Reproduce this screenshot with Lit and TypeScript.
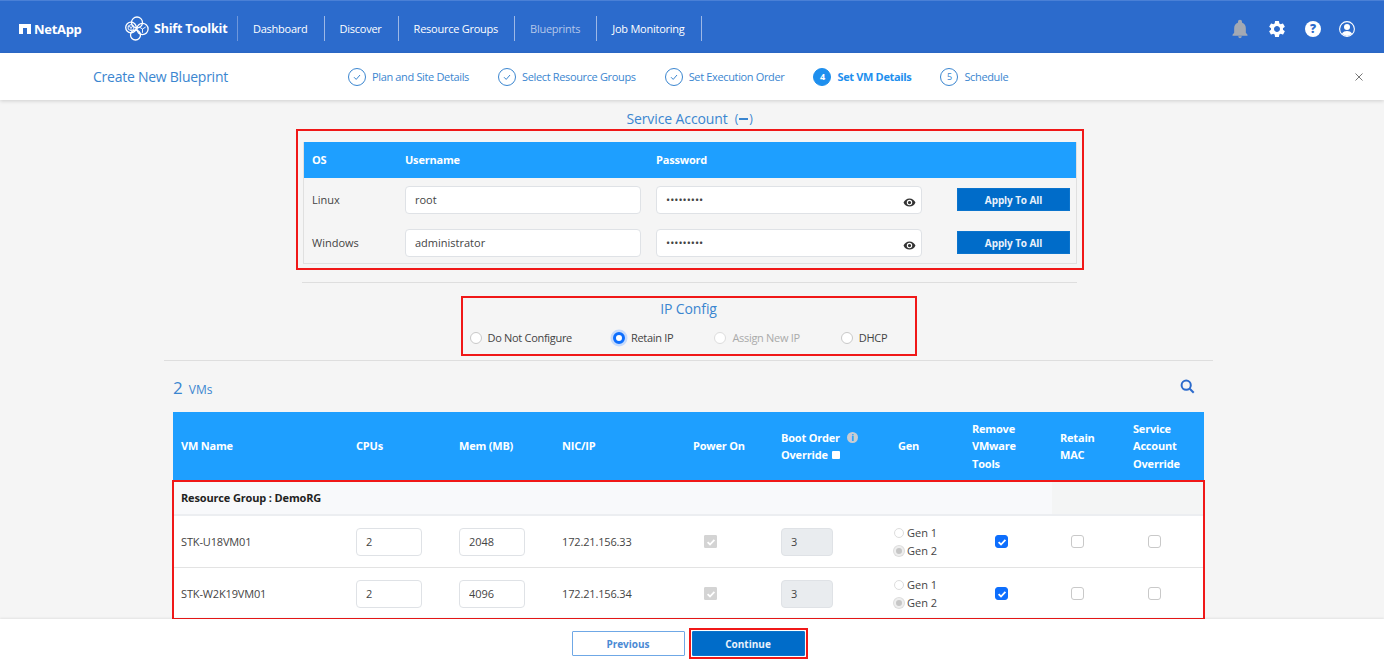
import { LitElement, html, css, svg } from 'lit';
import { customElement } from 'lit/decorators.js';

const NAV = [
  { label: 'Dashboard' },
  { label: 'Discover' },
  { label: 'Resource Groups' },
  { label: 'Blueprints', dim: true },
  { label: 'Job Monitoring' },
];

const STEPS = [
  { label: 'Plan and Site Details', state: 'done' },
  { label: 'Select Resource Groups', state: 'done' },
  { label: 'Set Execution Order', state: 'done' },
  { label: 'Set VM Details', state: 'active', num: 4 },
  { label: 'Schedule', state: 'todo', num: 5 },
];

const ACCOUNTS = [
  { os: 'Linux', user: 'root' },
  { os: 'Windows', user: 'administrator' },
];

const IP_OPTIONS = [
  { label: 'Do Not Configure' },
  { label: 'Retain IP', on: true },
  { label: 'Assign New IP', off: true },
  { label: 'DHCP' },
];

const VMS = [
  { name: 'STK-U18VM01', cpus: '2', mem: '2048', ip: '172.21.156.33' },
  { name: 'STK-W2K19VM01', cpus: '2', mem: '4096', ip: '172.21.156.34' },
];

const tick = svg`<path d="M3.6 7.2l2.4 2.3 4.4-4.6" fill="none" stroke="#fff" stroke-width="1.8"/>`;

@customElement('app-root')
export class AppRoot extends LitElement {
  static styles = css`
    :host {
      display: flex;
      flex-direction: column;
      height: 666px;
      overflow: hidden;
      background: #f5f5f5;
      color: #444;
      font-family: 'Open Sans', 'Noto Sans', sans-serif;
      font-size: 11px;
    }
    svg { display: block; }

    .topbar {
      flex: none;
      height: 53px;
      box-sizing: border-box;
      display: flex;
      align-items: center;
      background: #2c6bcc;
      border-top: 1px solid #4a80d6;
      color: #fff;
      padding: 3px 0 0 19px;
    }
    .netapp { display: flex; align-items: center; gap: 3px; width: 106px; font-size: 13px; font-weight: 700; letter-spacing: -0.3px; }
    .shift { display: flex; align-items: center; gap: 5px; width: 113px; box-sizing: border-box; font-size: 12.5px; font-weight: 700; letter-spacing: -0.2px; border-right: 1px solid #6e97dc; height: 25px; }
    .nav { display: flex; align-items: center; }
    .nav span { padding: 0 16px 0 15px; height: 25px; line-height: 25px; border-right: 1px solid #9db8e6; letter-spacing: -0.25px; }
    .nav span.dim { color: #b4c7ea; }
    .top-icons { margin-left: auto; margin-right: 29px; display: flex; align-items: center; gap: 17px; }
    .help { width: 16px; height: 16px; margin: 0 1px; border-radius: 50%; background: #fff; color: #2c6bcc; font-size: 12px; font-weight: 800; line-height: 16px; text-align: center; }

    .subbar {
      flex: none;
      height: 47px;
      display: flex;
      align-items: center;
      background: #fff;
      box-shadow: 0 1px 4px rgba(0, 0, 0, 0.16);
      position: relative;
      color: #3b86d0;
    }
    .subbar h1 { margin: 0 0 0 93px; width: 255px; font-size: 14px; font-weight: 400; letter-spacing: -0.25px; }
    .steps { display: flex; gap: 29px; }
    .step { display: flex; align-items: center; gap: 6px; letter-spacing: -0.35px; }
    .step.active { font-weight: 700; color: #1e8fee; gap: 6px; }
    .dot { width: 16px; height: 16px; box-sizing: content-box; border: 1px solid #3b86d0; border-radius: 50%; display: flex; align-items: center; justify-content: center; font-size: 9px; }
    .step.active .dot { background: #1e8fee; border-color: #1e8fee; color: #fff; }
    .close { margin-left: auto; margin-right: 21px; color: #777; }

    main { flex: 1; min-height: 0; display: flex; flex-direction: column; width: 1379px; }
    .sec-title { color: #3b86d0; font-size: 14px; font-weight: 400; text-align: center; letter-spacing: -0.1px; }
    .account-title { display: flex; justify-content: center; align-items: center; gap: 7px; height: 20px; margin-top: 9px; }
    .minus { display: flex; align-items: center; gap: 1px; font-size: 12px; }
    .minus i { display: block; width: 9px; height: 2px; background: #3b86d0; }

    .account-box { align-self: center; margin-left: 1px; width: 788px; height: 142px; box-sizing: border-box; border: 2px solid #f01818; padding: 11px 5px 4px; }
    .account-inner { height: 100%; box-sizing: border-box; border: 1px solid #e0e0e0; border-top: 0; }
    .acc-row { display: grid; grid-template-columns: 101px 251px 301px 1fr; align-items: center; }
    .acc-head { height: 36px; background: #1e9fff; color: #fff; font-weight: 700; margin-right: 0; letter-spacing: -0.2px; }
    .acc-row > div:first-child { padding-left: 8px; }
    .acc-body { display: flex; flex-direction: column; gap: 15px; padding-top: 8px; }
    .acc-body .acc-row { height: 28px; }
    .field { font: inherit; color: #444; background: #fff; border: 1px solid #dfe2e6; border-radius: 4px; box-sizing: border-box; height: 28px; padding: 0 9px; outline: none; display: block; }
    .user { width: 236px; }
    .pass-wrap { position: relative; width: 266px; }
    .pass-wrap .field { width: 100%; }
    .eye { position: absolute; right: 6px; top: 10px; }
    .apply { width: 113px; height: 23px; padding: 0; border: 1px solid #0b74cd; background: #006cc9; color: #e8f1fb; font: inherit; font-weight: 700; font-size: 10px; letter-spacing: -0.1px; }

    .rule1 { height: 1px; background: #dedede; width: 775px; margin: 12px 0 0 302px; }
    .ip-box { align-self: center; width: 456px; height: 60px; box-sizing: border-box; margin: 13px 0 4px -2px; border: 2px solid #f01818; padding-top: 1px; }
    .ip-opts { display: flex; gap: 41px; padding: 12px 0 0 7px; }
    .ip-opt { display: flex; align-items: center; gap: 6px; letter-spacing: -0.3px; }
    .ip-opt.off { color: #aaa; }
    .radio { width: 12px; height: 12px; box-sizing: border-box; background: #fff; border: 1px solid #c9c9c9; border-radius: 50%; flex: none; }
    .radio.off { border-color: #ddd; }
    .radio.on { border: 3.5px solid #0d6efd; box-shadow: 0 0 0 2.5px #c5dafb; }
    .radio.sm { width: 10px; height: 10px; border-color: #ddd; }
    .radio.sel { background: #c6c6c6; border: 2px solid #eee; box-shadow: 0 0 0 1px #ddd; }
    .rule2 { height: 1px; background: #dedede; width: 1049px; margin-left: 164px; }

    .vm-wrap { margin: 0 0 0 173px; width: 1031px; }
    .vm-top { display: flex; align-items: center; justify-content: space-between; height: 51px; color: #3b86d0; font-size: 12px; padding-right: 9px; }
    .vm-top b { font-size: 17px; font-weight: 400; margin-right: 6px; }
    .vm-count { display: flex; align-items: baseline; padding-top: 2px; }
    .vm-row { display: grid; grid-template-columns: 175px 103px 103px 131px 88px 117px 74px 88px 73px 79px; align-items: center; }
    .vm-row > div { padding-left: 8px; }
    .vm-head { height: 68px; background: #1e9fff; color: #fff; font-weight: 700; line-height: 17.5px; letter-spacing: -0.2px; }
    .boot-line { display: flex; align-items: center; gap: 7px; }
    .boot-line .mini { width: 8px; height: 8px; background: #fff; margin-left: -3px; border-radius: 1px; }
    .info { width: 11px; height: 11px; border-radius: 50%; background: #c8ccd2; color: #1e9fff; font-size: 8px; font-weight: 800; line-height: 11px; text-align: center; }

    .vm-body { outline: 2px solid #f01818; outline-offset: -1px; background: #fff; margin-top: 1px; }
    .group { height: 35px; box-sizing: border-box; background: linear-gradient(90deg, #f8f9fb 879px, #f4f5f5 879px); border-bottom: 2px solid #eceef1; padding-left: 8px; line-height: 33px; font-weight: 700; color: #222; letter-spacing: -0.15px; }
    .vm-line { height: 51px; border-bottom: 1px solid #e3e3e3; letter-spacing: -0.15px; }
    .vm-line:last-child { border-bottom: 0; }
    .num { width: 66px; }
    .boot { width: 52px; background: #e9ecef; }
    .gen { display: flex; flex-direction: column; gap: 3px; }
    .gen label { display: flex; align-items: center; gap: 3px; margin-left: -4px; line-height: 15px; letter-spacing: 0; }
    .box { width: 13px; height: 13px; box-sizing: border-box; border: 1px solid #c9c9c9; border-radius: 3px; background: #fff; }
    .box.lock { background: #d4d4d4; border-color: #d4d4d4; border-radius: 1px; }
    .box.blue { background: #0d6efd; border-color: #0d6efd; }
    .c-power { margin-left: 11px; }
    .c-remove { margin-left: 23px; }
    .c-retain { margin-left: 11px; }
    .c-svc { margin-left: 15px; }

    footer {
      flex: none;
      height: 47px;
      display: flex;
      justify-content: center;
      align-items: flex-start;
      gap: 4px;
      box-sizing: border-box;
      padding: 9px 5px 0 0;
      background: #fff;
      box-shadow: 0 -1px 2px rgba(0, 0, 0, 0.08);
      position: relative;
    }
    .btn { width: 113px; height: 25px; padding: 0; font: inherit; font-size: 10px; font-weight: 700; border-radius: 1px; }
    .prev { margin-top: 3px; background: #fff; color: #4a8ad4; border: 1px solid #6fa8e6; }
    .next-box { border: 2px solid #f01818; padding: 1px; }
    .next { display: block; background: #006cc9; color: #e8f1fb; border: 1px solid #0b74cd; }
  `;

  private logo() {
    return html`<svg width="24" height="25" viewBox="0 0 24 25" fill="none" stroke="#fff" stroke-width="1.3">
      <circle cx="12" cy="6.5" r="5.5" />
      <circle cx="6" cy="11.5" r="5.3" />
      <circle cx="17.5" cy="13" r="5.6" />
      <circle cx="10.5" cy="19" r="5" />
      <path d="M6 8.5l2.8 1.5v3.2L6 14.7l-2.8-1.5V10zM6 11.5v3.2M6 11.5l2.8-1.5M6 11.5l-2.8-1.5" stroke-width="0.9" />
      <path d="M17.5 13v3.8M17.5 13l-3.2-2M17.5 13l3.2-2" stroke-width="0.9" />
    </svg>`;
  }

  private check(kind: string) {
    return html`<div class="box ${kind}">
      ${kind ? html`<svg width="13" height="13" viewBox="0 0 13 13" style="margin:-1px">${tick}</svg>` : ''}
    </div>`;
  }

  private eye() {
    return html`<svg class="eye" width="13" height="13" viewBox="0 0 24 24" fill="#333">
      <path d="M12 4.5C7 4.5 2.7 7.6 1 12c1.7 4.4 6 7.5 11 7.5s9.3-3.1 11-7.5c-1.7-4.4-6-7.5-11-7.5zM12 17a5 5 0 1 1 0-10 5 5 0 0 1 0 10zm0-8a3 3 0 1 0 0 6 3 3 0 0 0 0-6z" />
    </svg>`;
  }

  render() {
    return html`
      <header class="topbar">
        <div class="netapp">
          <svg width="12" height="10" viewBox="0 0 12 10" fill="#fff"><path d="M0 0h12v10H8V4H4v6H0z" /></svg>
          NetApp
        </div>
        <div class="shift">${this.logo()} Shift Toolkit</div>
        <nav class="nav">
          ${NAV.map((n) => html`<span class=${n.dim ? 'dim' : ''}>${n.label}</span>`)}
        </nav>
        <div class="top-icons">
          <svg width="20" height="20" viewBox="0 0 24 24" fill="#a3a9b3" style="margin-right:0">
            <path d="M12 23a2.2 2.2 0 0 0 2.2-2.2h-4.4A2.2 2.2 0 0 0 12 23zm7-6.500v-5.500c0-3.300-1.700-5.900-4.500-6.600V3.500a2.500 2.500 0 0 0-5 0v.9C6.700 5.100 5 7.700 5 11v5.500L3 19v1h18v-1z" />
          </svg>
          <svg width="20" height="20" viewBox="0 0 24 24" fill="#fff">
            <path d="M19.140 12.940c.04-.3.06-.61.06-.94 0-.32-.02-.64-.07-.94l2.030-1.580a.49.49 0 0 0 .12-.61l-1.920-3.320a.488.488 0 0 0-.59-.22l-2.390.96c-.5-.38-1.030-.7-1.620-.94l-.36-2.540a.484.484 0 0 0-.48-.41h-3.840c-.24 0-.43.17-.47.41l-.36 2.540c-.59.24-1.130.57-1.620.94l-2.390-.96c-.22-.08-.47 0-.59.22L2.740 8.870c-.12.21-.08.47.12.61l2.030 1.580c-.05.3-.09.63-.09.94s.02.64.07.94l-2.030 1.580a.49.49 0 0 0-.12.61l1.920 3.320c.12.22.37.29.59.22l2.390-.96c.5.38 1.030.7 1.620.94l.36 2.540c.05.24.24.41.48.41h3.840c.24 0 .44-.17.47-.41l.36-2.540c.59-.24 1.130-.56 1.620-.94l2.390.96c.22.08.47 0 .59-.22l1.920-3.320c.12-.22.07-.47-.12-.61l-2.010-1.580zM12 15.600c-1.980 0-3.600-1.620-3.600-3.600s1.620-3.600 3.600-3.600 3.600 1.620 3.600 3.600-1.620 3.600-3.600 3.600z" />
          </svg>
          <div class="help">?</div>
          <svg width="16" height="16" viewBox="0 0 16 16">
            <circle cx="8" cy="8" r="7.400" fill="none" stroke="#fff" stroke-width="1.100" />
            <circle cx="8" cy="6" r="3" fill="#fff" />
            <path d="M2.900 12.600C4 10.600 6 9.900 8 9.900s4 .7 5.100 2.700A7 7 0 0 1 8 15a7 7 0 0 1-5.100-2.400z" fill="#fff" />
          </svg>
        </div>
      </header>

      <div class="subbar">
        <h1>Create New Blueprint</h1>
        <div class="steps">
          ${STEPS.map((s) => html`<div class="step ${s.state}">
            <div class="dot">
              ${s.state === 'done'
                ? html`<svg width="10" height="10" viewBox="0 0 10 10"><path d="M2 5.200l2.200 2.200L8 3" fill="none" stroke="#3b86d0" stroke-width="1" /></svg>`
                : s.num}
            </div>
            ${s.label}
          </div>`)}
        </div>
        <svg class="close" width="8" height="8" viewBox="0 0 8 8"><path d="M.5.5l7 7M7.500.5l-7 7" stroke="#777" stroke-width="1" /></svg>
      </div>

      <main>
        <div class="sec-title account-title">Service Account <span class="minus">(<i></i>)</span></div>
        <section class="account-box">
          <div class="account-inner">
            <div class="acc-row acc-head"><div>OS</div><div>Username</div><div>Password</div><div></div></div>
            <div class="acc-body">
              ${ACCOUNTS.map((a) => html`<div class="acc-row">
                <div>${a.os}</div>
                <div><input class="field user" .value=${a.user} /></div>
                <div class="pass-wrap">
                  <input class="field" type="password" value="password1" />${this.eye()}
                </div>
                <div><button class="apply">Apply To All</button></div>
              </div>`)}
            </div>
          </div>
        </section>
        <div class="rule1"></div>
        <section class="ip-box">
          <div class="sec-title">IP Config</div>
          <div class="ip-opts">
            ${IP_OPTIONS.map((o) => html`<div class="ip-opt ${o.off ? 'off' : ''}">
              <div class="radio ${o.on ? 'on' : ''} ${o.off ? 'off' : ''}"></div>
              ${o.label}
            </div>`)}
          </div>
        </section>
        <div class="rule2"></div>
        <section class="vm-wrap">
          <div class="vm-top">
            <div class="vm-count"><b>2</b> VMs</div>
            <svg width="15" height="15" viewBox="0 0 15 15" fill="none" stroke="#2c6bcc" stroke-width="2">
              <circle cx="6.200" cy="6.200" r="4.600" /><path d="M9.700 9.700l4 4" />
            </svg>
          </div>
          <div class="vm-row vm-head">
            <div>VM Name</div><div>CPUs</div><div>Mem (MB)</div><div>NIC/IP</div><div>Power On</div>
            <div>
              <div class="boot-line">Boot Order <span class="info">i</span></div>
              <div class="boot-line">Override <span class="mini"></span></div>
            </div>
            <div>Gen</div><div>Remove<br />VMware<br />Tools</div><div>Retain<br />MAC</div><div>Service<br />Account<br />Override</div>
          </div>
          <div class="vm-body">
            <div class="group">Resource Group : DemoRG</div>
            ${VMS.map((v) => html`<div class="vm-row vm-line">
              <div>${v.name}</div>
              <div><input class="field num" .value=${v.cpus} /></div>
              <div><input class="field num" .value=${v.mem} /></div>
              <div>${v.ip}</div>
              <div><div class="c-power">${this.check('lock')}</div></div>
              <div><input class="field boot" value="3" disabled /></div>
              <div class="gen">
                <label><span class="radio sm"></span>Gen 1</label>
                <label><span class="radio sm sel"></span>Gen 2</label>
              </div>
              <div><div class="c-remove">${this.check('blue')}</div></div>
              <div><div class="c-retain">${this.check('')}</div></div>
              <div><div class="c-svc">${this.check('')}</div></div>
            </div>`)}
          </div>
        </section>
      </main>

      <footer>
        <button class="btn prev">Previous</button>
        <div class="next-box"><button class="btn next">Continue</button></div>
      </footer>
    `;
  }
}
